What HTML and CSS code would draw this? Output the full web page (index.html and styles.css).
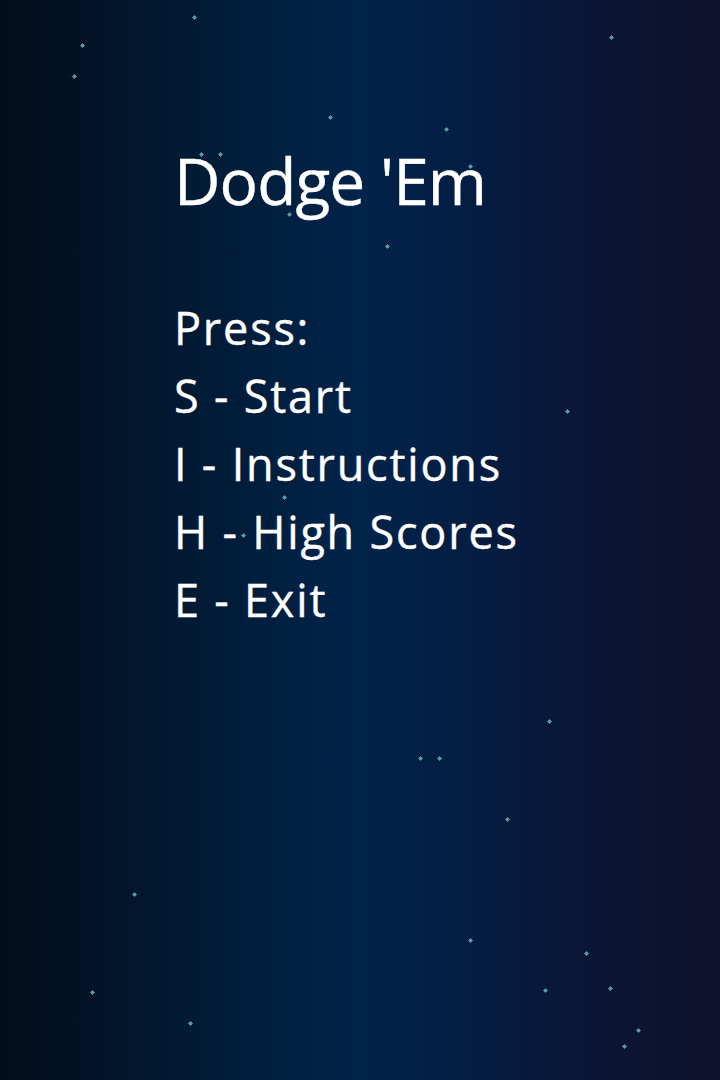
FILE: index.html
```html
<!DOCTYPE html>
<html lang="en">
<head>
<meta charset="utf-8">
<title>Dodge 'Em</title>
<link rel="stylesheet" href="styles.css">
</head>
<body>
<div class="screen">
  <div class="stars">
    <span class="star" style="left:194px;top:17px"></span>
    <span class="star" style="left:82px;top:45px"></span>
    <span class="star" style="left:74px;top:76px"></span>
    <span class="star" style="left:611px;top:37px"></span>
    <span class="star" style="left:330px;top:117px"></span>
    <span class="star" style="left:446px;top:129px"></span>
    <span class="star" style="left:201px;top:154px"></span>
    <span class="star" style="left:220px;top:154px"></span>
    <span class="star" style="left:470px;top:166px"></span>
    <span class="star" style="left:289px;top:214px"></span>
    <span class="star" style="left:387px;top:246px"></span>
    <span class="star" style="left:567px;top:411px"></span>
    <span class="star" style="left:284px;top:497px"></span>
    <span class="star" style="left:243px;top:535px"></span>
    <span class="star" style="left:549px;top:721px"></span>
    <span class="star" style="left:420px;top:758px"></span>
    <span class="star" style="left:439px;top:758px"></span>
    <span class="star" style="left:507px;top:819px"></span>
    <span class="star" style="left:134px;top:894px"></span>
    <span class="star" style="left:470px;top:940px"></span>
    <span class="star" style="left:586px;top:953px"></span>
    <span class="star" style="left:545px;top:990px"></span>
    <span class="star" style="left:610px;top:988px"></span>
    <span class="star" style="left:92px;top:992px"></span>
    <span class="star" style="left:190px;top:1023px"></span>
    <span class="star" style="left:638px;top:1030px"></span>
    <span class="star" style="left:624px;top:1046px"></span>
  </div>
  <main class="menu">
    <h1 class="title">Dodge 'Em</h1>
    <ul class="options">
      <li>Press:</li>
      <li>S - Start</li>
      <li>I - Instructions</li>
      <li>H - High Scores</li>
      <li>E - Exit</li>
    </ul>
  </main>
</div>
</body>
</html>
```

FILE: styles.css
```css
html, body {
  margin: 0;
  padding: 0;
}

body {
  width: 720px;
  height: 1080px;
  overflow: hidden;
  font-family: "Open Sans", "Noto Sans", sans-serif;
  color: #ffffff;
}

.screen {
  position: relative;
  width: 720px;
  height: 1080px;
  background: linear-gradient(to right,
    #020d1b 0%,
    #02172e 20%,
    #011f3f 38%,
    #02234a 50%,
    #041d42 65%,
    #0a1636 82%,
    #0f1129 100%);
}

.stars {
  position: absolute;
  inset: 0;
  pointer-events: none;
}

.star {
  position: absolute;
  width: 3px;
  height: 3px;
  margin: -1px 0 0 -1px;
  background: #5a959c;
  box-shadow:
    0 -2px 0 -1px #4a8289,
    0 2px 0 -1px #4a8289,
    -2px 0 0 -1px #4a8289,
    2px 0 0 -1px #4a8289;
}

.menu {
  position: relative;
  padding: 142px 0 0 174px;
}

.title {
  margin: 0;
  font-size: 64px;
  font-weight: 400;
  line-height: 77px;
  letter-spacing: -0.9px;
  -webkit-text-stroke: 0.4px #ffffff;
}

.options {
  list-style: none;
  margin: 75px 0 0;
  padding: 0;
  font-size: 45px;
  line-height: 68px;
  letter-spacing: 1.8px;
  -webkit-text-stroke: 0.4px #ffffff;
}
```
